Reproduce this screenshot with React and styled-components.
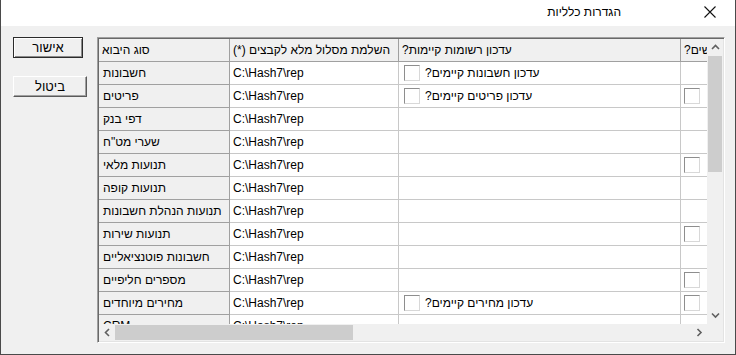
import React from 'react'
import styled, { createGlobalStyle } from 'styled-components'

const GlobalStyle = createGlobalStyle`
  html, body {
    margin: 0;
    padding: 0;
    background: #f0f0f0;
  }
  body {
    font-family: "Liberation Sans", "DejaVu Sans", sans-serif;
    font-size: 12px;
    color: #000;
  }
`

const PATH = 'C:\\Hash7\\rep'

const rows = [
  { name: 'חשבונות', update: 'עדכון חשבונות קיימים?', extra: false },
  { name: 'פריטים', update: 'עדכון פריטים קיימים?', extra: true },
  { name: 'דפי בנק', update: null, extra: false },
  { name: 'שערי מט"ח', update: null, extra: false },
  { name: 'תנועות מלאי', update: null, extra: true },
  { name: 'תנועות קופה', update: null, extra: false },
  { name: 'תנועות הנהלת חשבונות', update: null, extra: false },
  { name: 'תנועות שירות', update: null, extra: true },
  { name: 'חשבונות פוטנציאליים', update: null, extra: false },
  { name: 'מספרים חליפיים', update: null, extra: true },
  { name: 'מחירים מיוחדים', update: 'עדכון מחירים קיימים?', extra: true },
  { name: 'CRM', update: null, extra: false },
]

const columns = [131, 169, 282, 90]

const App = () => {
  return (
    <>
      <GlobalStyle />
      <Window>
        <TitleBar>
          <Title dir="rtl">הגדרות כלליות</Title>
          <CloseButton>
            <svg width="12" height="12" viewBox="0 0 12 12">
              <path d="M0.5 0.5 L11.5 11.5 M11.5 0.5 L0.5 11.5" stroke="#111" strokeWidth="1.1" fill="none" />
            </svg>
          </CloseButton>
        </TitleBar>
        <Body>
          <ButtonColumn>
            <DialogButton $default $width={70} dir="rtl">אישור</DialogButton>
            <DialogButton $width={74} dir="rtl">ביטול</DialogButton>
          </ButtonColumn>
          <GridFrame>
            <GridInner>
              <CellsArea>
                <Row>
                  <HeaderCell $width={columns[0]}><RtlText>סוג היבוא</RtlText></HeaderCell>
                  <HeaderCell $width={columns[1]}><RtlText>השלמת מסלול מלא לקבצים (*)</RtlText></HeaderCell>
                  <HeaderCell $width={columns[2]}><RtlText>עדכון רשומות קיימות?</RtlText></HeaderCell>
                  <HeaderCell $width={columns[3]}><RtlText>הוספת חדשים?</RtlText></HeaderCell>
                </Row>
                {rows.map((row) => (
                  <Row key={row.name}>
                    <FixedCell $width={columns[0]}><RtlText>{row.name}</RtlText></FixedCell>
                    <DataCell $width={columns[1]}>{PATH}</DataCell>
                    <DataCell $width={columns[2]} $pad={5}>
                      {row.update && (
                        <>
                          <CheckBox />
                          <RtlText>{row.update}</RtlText>
                        </>
                      )}
                    </DataCell>
                    <DataCell $width={columns[3]} $pad={3}>
                      {row.extra && <CheckBox />}
                    </DataCell>
                  </Row>
                ))}
              </CellsArea>
              <VScroll>
                <ArrowBox>
                  <Chevron d="M1 5 L4.5 1.5 L8 5" />
                </ArrowBox>
                <VTrack>
                  <VThumb />
                </VTrack>
                <ArrowBox>
                  <Chevron d="M1 1.5 L4.5 5 L8 1.5" />
                </ArrowBox>
              </VScroll>
              <HScroll>
                <ArrowBox>
                  <Chevron d="M5 1 L1.5 4.5 L5 8" rotated />
                </ArrowBox>
                <HTrack>
                  <HThumb />
                </HTrack>
                <ArrowBox>
                  <Chevron d="M1.5 1 L5 4.5 L1.5 8" rotated />
                </ArrowBox>
              </HScroll>
              <Corner />
            </GridInner>
          </GridFrame>
        </Body>
      </Window>
    </>
  )
}

export default App

const Chevron = ({ d, rotated }) => (
  <svg width={rotated ? 7 : 9} height={rotated ? 9 : 7} viewBox={rotated ? '0 0 7 9' : '0 0 9 7'}>
    <path d={d} stroke="#606060" strokeWidth="1.6" fill="none" />
  </svg>
)

const Window = styled.div`
  width: 736px;
  height: 355px;
  box-sizing: border-box;
  border: 1px solid #4a4a4a;
  border-top: none;
  display: flex;
  flex-direction: column;
  background: #f0f0f0;
  overflow: hidden;
`

const TitleBar = styled.div`
  height: 26px;
  flex: none;
  background: #fff;
  display: flex;
  align-items: center;
  justify-content: flex-end;
`

const Title = styled.div`
  font-size: 12px;
  margin-right: 83px;
  padding-bottom: 2px;
`

const CloseButton = styled.div`
  width: 23px;
  display: flex;
  align-items: center;
  margin-right: 8px;
  padding-bottom: 2px;
`

const Body = styled.div`
  flex: 1;
  display: flex;
  padding: 11px 0 0 12px;
  gap: 10px;
`

const ButtonColumn = styled.div`
  width: 74px;
  display: flex;
  flex-direction: column;
  gap: 18px;
`

const DialogButton = styled.div`
  width: ${(p) => p.$width}px;
  height: 21px;
  box-sizing: border-box;
  background: #f0f0f0;
  font-size: 13px;
  display: flex;
  align-items: center;
  justify-content: center;
  border: 1px solid;
  border-color: ${(p) => (p.$default ? '#2b2b2b' : '#ffffff #5a5a5a #5a5a5a #ffffff')};
  box-shadow: ${(p) =>
    p.$default
      ? 'inset 1px 1px 0 #ffffff, inset -1px -1px 0 #8a8a8a'
      : 'inset -1px -1px 0 #a0a0a0'};
`

const GridFrame = styled.div`
  width: 628px;
  height: 306px;
  box-sizing: border-box;
  border: 1px solid;
  border-color: #a0a0a0 #ffffff #ffffff #a0a0a0;
  box-shadow: inset 1px 1px 0 #696969, inset -1px -1px 0 #e3e3e3;
  padding: 1px;
`

const GridInner = styled.div`
  width: 100%;
  height: 100%;
  display: grid;
  grid-template-columns: 1fr 16px;
  grid-template-rows: 1fr 17px;
  overflow: hidden;
`

const CellsArea = styled.div`
  overflow: hidden;
  background: #fff;
  display: flex;
  flex-direction: column;
`

const Row = styled.div`
  display: flex;
  flex: none;
  height: 23px;
`

const Cell = styled.div`
  width: ${(p) => p.$width}px;
  flex: none;
  box-sizing: border-box;
  height: 23px;
  display: flex;
  align-items: center;
  gap: 5px;
  padding-left: ${(p) => p.$pad ?? 3}px;
  white-space: nowrap;
  overflow: hidden;
  text-align: left;
`

const HeaderCell = styled(Cell)`
  background: #f0f0f0;
  border-right: 1px solid #a0a0a0;
  border-bottom: 1px solid #a0a0a0;
`

const FixedCell = styled(Cell)`
  background: #f0f0f0;
  padding-left: 4px;
  border-right: 1px solid #a0a0a0;
  border-bottom: 1px solid #a0a0a0;
`

const DataCell = styled(Cell)`
  background: #fff;
  border-right: 1px solid #c8c8c8;
  border-bottom: 1px solid #c8c8c8;
`

const RtlText = styled.span`
  direction: rtl;
  unicode-bidi: isolate;
  white-space: nowrap;
  flex: none;
`

const CheckBox = styled.span`
  width: 16px;
  height: 16px;
  flex: none;
  box-sizing: border-box;
  background: #fff;
  border: 1px solid;
  border-color: #8e8e8e #d8d8d8 #d8d8d8 #8e8e8e;
`

const ArrowBox = styled.div`
  width: 16px;
  height: 17px;
  flex: none;
  display: flex;
  align-items: center;
  justify-content: center;
`

const VScroll = styled.div`
  background: #f0f0f0;
  display: flex;
  flex-direction: column;
`

const VTrack = styled.div`
  flex: 1;
  padding: 0 1px;
`

const VThumb = styled.div`
  height: 116px;
  background: #cdcdcd;
`

const HScroll = styled.div`
  background: #f0f0f0;
  display: flex;
`

const HTrack = styled.div`
  flex: 1;
  padding: 1px 0;
`

const HThumb = styled.div`
  width: 238px;
  height: 100%;
  background: #cdcdcd;
`

const Corner = styled.div`
  background: #f0f0f0;
`
